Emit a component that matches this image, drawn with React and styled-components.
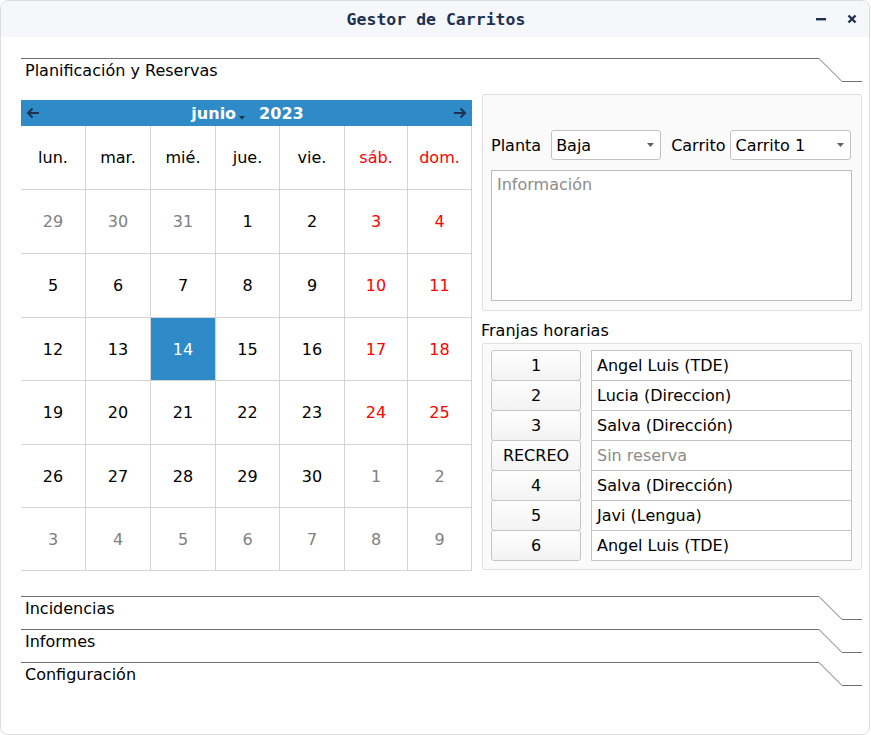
import React from "react";
import styled, { createGlobalStyle } from "styled-components";

const Global = createGlobalStyle`
  html, body { margin: 0; padding: 0; background: #ffffff; }
  body { font-family: "DejaVu Sans", "Noto Sans", sans-serif; font-size: 16px; color: #000; }
  * { box-sizing: border-box; }
`;

const Window = styled.div`
  width: 870px;
  height: 735px;
  border: 1px solid #dcdcdc;
  border-radius: 8px;
  background: #ffffff;
  overflow: hidden;
  display: flex;
  flex-direction: column;
`;

const TitleBar = styled.div`
  height: 36px;
  background: #f5f7fa;
  display: flex;
  align-items: center;
  justify-content: center;
  position: relative;
  font-family: "DejaVu Sans Mono", "Liberation Mono", monospace;
  font-weight: bold;
  font-size: 16.5px;
  color: #1c3150;
`;

const TitleText = styled.span`
  margin-left: 2px;
`;

const WinButtons = styled.div`
  position: absolute;
  right: 8px;
  top: 0;
  height: 36px;
  display: flex;
  align-items: center;
  gap: 13px;
`;

const WinBtn = styled.span`
  width: 18px;
  display: flex;
  justify-content: center;
  align-items: center;
`;

const Body = styled.div`
  flex: 1;
  padding: 21px 7px 0 20px;
  display: flex;
  flex-direction: column;
`;

const SectionHead = styled.div`
  display: flex;
  height: 24px;
  margin-top: ${(p) => p.$mt || 0}px;
`;

const HeadLabel = styled.div`
  flex: 1;
  border-top: 1px solid #707070;
  padding: 1px 0 0 4px;
  line-height: 22px;
  font-size: 16px;
  color: #000;
`;

const HeadTail = styled.svg`
  width: 43px;
  height: 24px;
  display: block;
`;

const SectionHeader = ({ children, mt }) => (
  <SectionHead $mt={mt}>
    <HeadLabel>{children}</HeadLabel>
    <HeadTail viewBox="0 0 43 24">
      <path d="M0 0.5 L23 23.5 L43 23.5" fill="none" stroke="#707070" strokeWidth="1" />
    </HeadTail>
  </SectionHead>
);

const Content = styled.div`
  display: flex;
  gap: 10px;
  margin-top: 12px;
`;

const Calendar = styled.div`
  width: 451px;
  margin-top: 6px;
  display: flex;
  flex-direction: column;
`;

const NavBar = styled.div`
  height: 26px;
  background: #2e8bc8;
  display: flex;
  align-items: center;
  justify-content: space-between;
  padding: 0 5px 0 5px;
`;

const NavCenter = styled.div`
  display: flex;
  align-items: center;
  color: #ffffff;
  font-weight: bold;
  font-size: 16px;
  margin-left: 2px;
`;

const MonthDrop = styled.svg`
  width: 6px;
  height: 4px;
  margin: 9px 14px 0 3px;
`;

const Grid = styled.div`
  display: grid;
  grid-template-columns: 65px 65px 65px 64px 65px 63px 64px;
  grid-template-rows: 64px 64px 64px 63px 64px 63px 63px;
`;

const Cell = styled.div`
  display: flex;
  align-items: center;
  justify-content: center;
  border-bottom: 1px solid #d4d4d4;
  border-right: 1px solid #d4d4d4;
  font-size: 16px;
  background: ${(p) => (p.$selected ? "#2e8bc8" : "#ffffff")};
  color: ${(p) =>
    p.$selected ? "#ffffff" : p.$other ? "#808080" : p.$weekend ? "#ff0000" : "#000000"};
`;

const GridRowWrap = styled.div`
  display: contents;
`;

const RightCol = styled.div`
  width: 380px;
  display: flex;
  flex-direction: column;
`;

const GroupBox = styled.div`
  border: 1px solid #e0e0e0;
  border-radius: 2px;
  background: #fafafa;
  padding: ${(p) => p.$pad};
`;

const ComboRow = styled.div`
  display: flex;
  align-items: center;
  height: 30px;
`;

const Label = styled.span`
  font-size: 16px;
  margin-right: ${(p) => p.$mr}px;
`;

const Combo = styled.div`
  width: ${(p) => p.$w}px;
  height: 30px;
  border: 1px solid #c2c2c2;
  border-radius: 3px;
  background: #ffffff;
  display: flex;
  align-items: center;
  justify-content: space-between;
  padding: 0 6px 0 4px;
  margin-right: ${(p) => p.$mr || 0}px;
  font-size: 16px;
`;

const ComboArrow = styled.svg`
  width: 7px;
  height: 4px;
`;

const Info = styled.div`
  margin-top: 10px;
  height: 131px;
  border: 1px solid #bcbcbc;
  background: #ffffff;
  padding: 4px 5px;
  color: #8c8c8c;
  font-size: 16px;
`;

const SubLabel = styled.div`
  margin: 10px 0 2px -1px;
  font-size: 16px;
  line-height: 20px;
`;

const SlotRow = styled.div`
  display: flex;
  gap: 10px;
  height: 30px;
`;

const SlotButton = styled.div`
  width: 90px;
  height: 31px;
  border: 1px solid #c6c6c6;
  border-radius: 3px;
  background: linear-gradient(#fefefe, #f3f3f3);
  display: flex;
  align-items: center;
  justify-content: center;
  font-size: 16px;
`;

const SlotField = styled.div`
  width: 261px;
  height: 31px;
  border: 1px solid #c4c4c4;
  background: #ffffff;
  display: flex;
  align-items: center;
  padding: 0 0 1px 5px;
  font-size: 16px;
  color: ${(p) => (p.$empty ? "#8c8c8c" : "#000000")};
`;

const dayNames = ["lun.", "mar.", "mié.", "jue.", "vie.", "sáb.", "dom."];

const weeks = [
  [[29, 1], [30, 1], [31, 1], [1], [2], [3], [4]],
  [[5], [6], [7], [8], [9], [10], [11]],
  [[12], [13], [14], [15], [16], [17], [18]],
  [[19], [20], [21], [22], [23], [24], [25]],
  [[26], [27], [28], [29], [30], [1, 1], [2, 1]],
  [[3, 1], [4, 1], [5, 1], [6, 1], [7, 1], [8, 1], [9, 1]],
];

const slots = [
  ["1", "Angel Luis (TDE)"],
  ["2", "Lucia (Direccion)"],
  ["3", "Salva (Dirección)"],
  ["RECREO", "Sin reserva", true],
  ["4", "Salva (Dirección)"],
  ["5", "Javi (Lengua)"],
  ["6", "Angel Luis (TDE)"],
];

const Arrow = ({ dir }) => (
  <svg width="14" height="12" viewBox="0 0 14 12">
    {dir === "left" ? (
      <path d="M13 6 H2 M6.5 1.5 L2 6 L6.5 10.5" fill="none" stroke="#1c3150" strokeWidth="2" />
    ) : (
      <path d="M1 6 H12 M7.5 1.5 L12 6 L7.5 10.5" fill="none" stroke="#1c3150" strokeWidth="2" />
    )}
  </svg>
);

export default function App() {
  return (
    <>
      <Global />
      <Window>
        <TitleBar>
          <TitleText>Gestor de Carritos</TitleText>
          <WinButtons>
            <WinBtn>
              <svg width="10" height="3" viewBox="0 0 10 3">
                <rect x="0" y="0" width="10" height="2.4" fill="#1c3150" />
              </svg>
            </WinBtn>
            <WinBtn>
              <svg width="10" height="10" viewBox="0 0 10 10">
                <path d="M1.5 1.5 L8.5 8.5 M8.5 1.5 L1.5 8.5" stroke="#1c3150" strokeWidth="2.4" />
              </svg>
            </WinBtn>
          </WinButtons>
        </TitleBar>
        <Body>
          <SectionHeader>Planificación y Reservas</SectionHeader>
          <Content>
            <Calendar>
              <NavBar>
                <Arrow dir="left" />
                <NavCenter>
                  <span>junio</span>
                  <MonthDrop viewBox="0 0 6 4">
                    <path d="M0 0 H6 L3 3.5 Z" fill="#1c3150" />
                  </MonthDrop>
                  <span>2023</span>
                </NavCenter>
                <Arrow dir="right" />
              </NavBar>
              <Grid>
                {dayNames.map((d, i) => (
                  <Cell key={d} $weekend={i >= 5}>
                    {d}
                  </Cell>
                ))}
                {weeks.map((w, wi) => (
                  <GridRowWrap key={wi}>
                    {w.map(([n, other], di) => (
                      <Cell
                        key={di}
                        $other={!!other}
                        $weekend={di >= 5}
                        $selected={!other && n === 14}
                      >
                        {n}
                      </Cell>
                    ))}
                  </GridRowWrap>
                ))}
              </Grid>
            </Calendar>
            <RightCol>
              <GroupBox $pad="35px 9px 9px 8px">
                <ComboRow>
                  <Label $mr={10}>Planta</Label>
                  <Combo $w={110} $mr={10}>
                    <span>Baja</span>
                    <ComboArrow viewBox="0 0 7 4">
                      <path d="M0 0 H7 L3.5 4 Z" fill="#606060" />
                    </ComboArrow>
                  </Combo>
                  <Label $mr={5}>Carrito</Label>
                  <Combo $w={121}>
                    <span>Carrito 1</span>
                    <ComboArrow viewBox="0 0 7 4">
                      <path d="M0 0 H7 L3.5 4 Z" fill="#606060" />
                    </ComboArrow>
                  </Combo>
                </ComboRow>
                <Info>Información</Info>
              </GroupBox>
              <SubLabel>Franjas horarias</SubLabel>
              <GroupBox $pad="6px 9px 9px 8px">
                {slots.map(([b, t, empty]) => (
                  <SlotRow key={b}>
                    <SlotButton>{b}</SlotButton>
                    <SlotField $empty={empty}>{t}</SlotField>
                  </SlotRow>
                ))}
              </GroupBox>
            </RightCol>
          </Content>
          <SectionHeader mt={25}>Incidencias</SectionHeader>
          <SectionHeader mt={9}>Informes</SectionHeader>
          <SectionHeader mt={9}>Configuración</SectionHeader>
        </Body>
      </Window>
    </>
  );
}
